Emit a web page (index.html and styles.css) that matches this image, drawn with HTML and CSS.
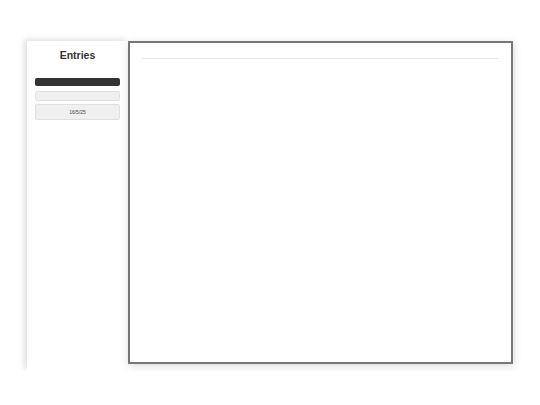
FILE: index.html
```html
<!DOCTYPE html>
<html>
<head>
<meta charset="utf-8">
<link rel="stylesheet" href="styles.css">
</head>
<body>
<div class="app">
  <aside class="sidebar">
    <h1 class="title">Entries</h1>
    <div class="bar-dark"></div>
    <div class="bar-light"></div>
    <div class="entry">16/5/25</div>
  </aside>
  <main class="main">
    <div class="rule"></div>
  </main>
</div>
</body>
</html>
```

FILE: styles.css
```css
html, body {
  margin: 0;
  background: #ffffff;
  font-family: "Liberation Sans", Arial, sans-serif;
}
.app {
  display: flex;
  align-items: flex-start;
  padding: 41px 0 0 27px;
}
.sidebar {
  width: 101px;
  height: 330px;
  box-sizing: border-box;
  padding: 7px 8px 0 8px;
  background: #fff;
  box-shadow: -3px -2px 6px rgba(0,0,0,0.12);
  display: flex;
  flex-direction: column;
}
.title {
  margin: 0 0 16px 0;
  font-size: 10.5px;
  line-height: 14px;
  font-weight: bold;
  text-align: center;
  color: #333;
}
.bar-dark {
  height: 8px;
  background: #333;
  border-radius: 2px;
}
.bar-light {
  margin-top: 5px;
  height: 10px;
  box-sizing: border-box;
  background: #f0f0f0;
  border: 1px solid #e0e0e0;
  border-radius: 2px;
}
.entry {
  margin-top: 3px;
  height: 16px;
  box-sizing: border-box;
  background: #f0f0f0;
  border: 1px solid #e0e0e0;
  border-radius: 2px;
  font-size: 5px;
  line-height: 14px;
  text-align: center;
  color: #444;
}
.main {
  width: 385px;
  height: 323px;
  box-sizing: border-box;
  border: 2px solid #777;
  background: #fff;
  padding: 15px 12px 0 12px;
  box-shadow: 1px 2px 8px rgba(0,0,0,0.15);
}
.rule {
  height: 1px;
  background: #e6e6e6;
}
```
